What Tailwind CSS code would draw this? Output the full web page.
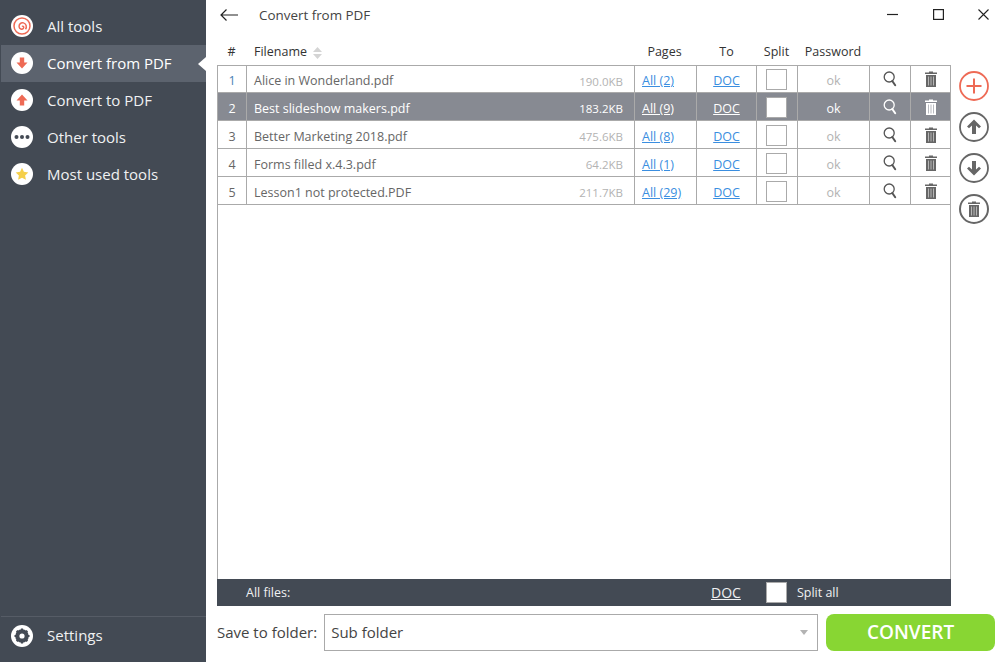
<!DOCTYPE html>
<html lang="en">
<head>
    <meta charset="UTF-8">
    <title>Convert from PDF</title>
    <script src="https://cdn.jsdelivr.net/npm/@tailwindcss/browser@4"></script>
</head>
<body class="w-[1006px] h-[662px] overflow-hidden bg-white flex font-['Open_Sans','Noto_Sans',sans-serif] text-[12.5px] text-[#666]">
    <svg class="hidden">
        <symbol id="search" viewBox="0 0 14 16"><circle cx="6.200" cy="6" r="5" fill="none" stroke="currentColor" stroke-width="1.300"/><path d="M9.300 10l2.900 4.200" stroke="currentColor" stroke-width="2" stroke-linecap="round"/></symbol>
        <symbol id="trash" viewBox="0 0 12 16"><path d="M4 1.500V.5h4v1h4v1.500H0V1.500z" fill="currentColor"/><path d="M1 4h10v12H1z" fill="currentColor"/><path d="M3.500 5.500v9M6 5.500v9M8.500 5.500v9" stroke="var(--slot)" stroke-width="1"/></symbol>
    </svg>

    <!-- sidebar -->
    <aside class="w-[206px] h-full bg-[#434a54] flex flex-col text-[15px] text-[#f0f1f2]">
        <nav class="pt-[8px] flex flex-col">
            <a class="h-[37px] flex items-center pl-[11px] gap-[14px] pb-[1px]">
                <svg width="22" height="22" viewBox="0 0 22 22"><circle cx="11" cy="11" r="11" fill="#fff"/><circle cx="11" cy="11" r="8" fill="none" stroke="#ee6a55" stroke-width="1.500"/><path d="M11 11.500c1-.9 2.300.5 1.400 1.800-1.200 1.600-4 .8-4.300-1.400C7.700 9.300 10 7.200 12.500 7.900c2.800.8 3.600 4.100 2 6.300" fill="none" stroke="#ee6a55" stroke-width="1.500"/></svg>
                All tools
            </a>
            <a class="relative h-[37px] ml-[1px] flex items-center pl-[10px] gap-[14px] bg-[#5c636e] text-white pb-[1px]">
                <svg width="22" height="22" viewBox="0 0 22 22"><circle cx="11" cy="11" r="11" fill="#fff"/><path d="M8.800 5.500h4.400v5h3.300L11 16.500l-5.500-6h3.300z" fill="#ee6a55"/></svg>
                Convert from PDF
                <span class="absolute right-0 top-[12px] w-0 h-0 border-y-[7px] border-y-transparent border-r-[8px] border-r-white"></span>
            </a>
            <a class="h-[37px] flex items-center pl-[11px] gap-[14px] pb-[1px]">
                <svg width="22" height="22" viewBox="0 0 22 22"><circle cx="11" cy="11" r="11" fill="#fff"/><path d="M8.800 16.500h4.400v-5h3.300L11 5.500l-5.500 6h3.300z" fill="#ee6a55"/></svg>
                Convert to PDF
            </a>
            <a class="h-[37px] flex items-center pl-[11px] gap-[14px] pb-[1px]">
                <svg width="22" height="22" viewBox="0 0 22 22"><circle cx="11" cy="11" r="11" fill="#fff"/><circle cx="5.500" cy="11" r="2" fill="#434a54"/><circle cx="11" cy="11" r="2" fill="#434a54"/><circle cx="16.500" cy="11" r="2" fill="#434a54"/></svg>
                Other tools
            </a>
            <a class="h-[37px] flex items-center pl-[11px] gap-[14px] pb-[1px]">
                <svg width="22" height="22" viewBox="0 0 22 22"><circle cx="11" cy="11" r="11" fill="#fff"/><path d="M11 4.800l1.900 4 4.400.6-3.200 3 .8 4.400-3.900-2.100-3.900 2.100.8-4.400-3.200-3 4.400-.6z" fill="#f5cf4a"/></svg>
                Most used tools
            </a>
        </nav>
        <a class="mt-auto ml-[1px] h-[46px] border-t border-[#565c66] flex items-center pl-[10px] gap-[14px] pb-[8px]">
            <svg width="22" height="22" viewBox="0 0 22 22"><circle cx="11" cy="11" r="11" fill="#fff"/><circle cx="11" cy="11" r="5.500" fill="none" stroke="#434a54" stroke-width="2.600"/><path d="M11 3.500v15M3.500 11h15M5.700 5.700l10.600 10.600M16.300 5.700L5.700 16.300" stroke="#434a54" stroke-width="2.200"/><circle cx="11" cy="11" r="4.400" fill="#434a54"/><circle cx="11" cy="11" r="2.600" fill="#fff"/></svg>
            Settings
        </a>
    </aside>

    <main class="flex-1 min-w-0 flex flex-col pl-[11px] pr-[11px]">
        <!-- title bar -->
        <header class="h-[30px] flex items-center text-[13.4px] text-[#444]">
            <svg class="ml-[3px]" width="18" height="12" viewBox="0 0 18 12"><path d="M18 6H1M6.500.5L1 6l5.500 5.500" fill="none" stroke="#222" stroke-width="1.200"/></svg>
            <span class="ml-[21px]">Convert from PDF</span>
            <div class="ml-auto flex items-center gap-[34px] pr-[6px] -mt-[2px]">
                <svg width="12" height="12" viewBox="0 0 12 12"><path d="M0 6.500h11" stroke="#222" stroke-width="1.200"/></svg>
                <svg width="11" height="11" viewBox="0 0 11 11"><rect x=".6" y=".6" width="9.800" height="9.800" fill="none" stroke="#222" stroke-width="1.200"/></svg>
                <svg width="11" height="11" viewBox="0 0 11 11"><path d="M.5.500l10 10M10.500.500l-10 10" stroke="#222" stroke-width="1.100"/></svg>
            </div>
        </header>

        <div class="flex-1 min-h-0 flex">
            <div class="w-[734px] flex flex-col">
                <!-- column headings -->
                <div class="h-[35px] pl-[1px] grid grid-cols-[29px_388px_62px_60px_41px_72px_41px_40px] items-center text-[#333] pt-[10px]">
                    <span class="text-center -ml-[2px]">#</span>
                    <span class="pl-[7px] flex items-center gap-[6px]">Filename
                        <svg width="9" height="12" viewBox="0 0 9 12"><path d="M4.500 0L9 5H0zM4.500 12L0 7h9z" fill="#d4d4d4"/></svg>
                    </span>
                    <span class="text-center -ml-[3px]">Pages</span>
                    <span class="text-center -ml-[1px]">To</span>
                    <span class="text-center -ml-[2px]">Split</span>
                    <span class="text-center -ml-[2px]">Password</span>
                </div>

                <!-- file list -->
                <div class="flex-1 min-h-0 border border-b-0 border-[#aaa]">
                    <div class="h-[27px] grid grid-cols-[29px_388px_62px_60px_41px_72px_41px_40px] border-b border-[#aaa] [--slot:#b5b5b5]">
                        <span class="border-r border-[#aaa] flex items-center justify-center pt-[5px] text-[#4a7fb5]">1</span>
                        <span class="border-r border-[#aaa] flex items-center pl-[7px] pr-[11px] justify-between pt-[5px]"><span>Alice in Wonderland.pdf</span><span class="text-[11.5px] text-[#b3b3b3]">190.0KB</span></span>
                        <span class="border-r border-[#aaa] flex items-center pl-[7px] pt-[5px] text-[#3a8ee0] underline">All (2)</span>
                        <span class="border-r border-[#aaa] flex items-center justify-center pt-[5px] text-[#3a8ee0] underline">DOC</span>
                        <span class="border-r border-[#aaa] flex items-center justify-center pt-[1px] pr-[1px]"><span class="w-[21px] h-[21px] border border-[#aaa] bg-white"></span></span>
                        <span class="border-r border-[#aaa] flex items-center justify-center pt-[5px] text-[#b3b3b3]">ok</span>
                        <span class="border-r border-[#aaa] flex items-start justify-center pt-[5px] text-[#555]"><svg width="14" height="16"><use href="#search"/></svg></span>
                        <span class="flex items-start justify-center pt-[5px] text-[#666]"><svg width="12" height="16"><use href="#trash"/></svg></span>
                    </div>
                    <div class="h-[28px] grid grid-cols-[29px_388px_62px_60px_41px_72px_41px_40px] border-b border-[#aaa] bg-[#878a92] text-white [--slot:#b8bac0]">
                        <span class="border-r border-[#aaa] flex items-center justify-center pt-[5px]">2</span>
                        <span class="border-r border-[#aaa] flex items-center pl-[7px] pr-[11px] justify-between pt-[5px]"><span>Best slideshow makers.pdf</span><span class="text-[11.5px]">183.2KB</span></span>
                        <span class="border-r border-[#aaa] flex items-center pl-[7px] pt-[5px] underline">All (9)</span>
                        <span class="border-r border-[#aaa] flex items-center justify-center pt-[5px] underline">DOC</span>
                        <span class="border-r border-[#aaa] flex items-center justify-center pt-[1px] pr-[1px]"><span class="w-[21px] h-[21px] border border-[#aaa] bg-white"></span></span>
                        <span class="border-r border-[#aaa] flex items-center justify-center pt-[5px]">ok</span>
                        <span class="border-r border-[#aaa] flex items-start justify-center pt-[6px]"><svg width="14" height="16"><use href="#search"/></svg></span>
                        <span class="flex items-start justify-center pt-[6px]"><svg width="12" height="16"><use href="#trash"/></svg></span>
                    </div>
                    <div class="h-[28px] grid grid-cols-[29px_388px_62px_60px_41px_72px_41px_40px] border-b border-[#aaa] [--slot:#b5b5b5]">
                        <span class="border-r border-[#aaa] flex items-center justify-center pt-[5px] text-[#666]">3</span>
                        <span class="border-r border-[#aaa] flex items-center pl-[7px] pr-[11px] justify-between pt-[5px]"><span>Better Marketing 2018.pdf</span><span class="text-[11.5px] text-[#b3b3b3]">475.6KB</span></span>
                        <span class="border-r border-[#aaa] flex items-center pl-[7px] pt-[5px] text-[#3a8ee0] underline">All (8)</span>
                        <span class="border-r border-[#aaa] flex items-center justify-center pt-[5px] text-[#3a8ee0] underline">DOC</span>
                        <span class="border-r border-[#aaa] flex items-center justify-center pt-[1px] pr-[1px]"><span class="w-[21px] h-[21px] border border-[#aaa] bg-white"></span></span>
                        <span class="border-r border-[#aaa] flex items-center justify-center pt-[5px] text-[#b3b3b3]">ok</span>
                        <span class="border-r border-[#aaa] flex items-start justify-center pt-[6px] text-[#555]"><svg width="14" height="16"><use href="#search"/></svg></span>
                        <span class="flex items-start justify-center pt-[6px] text-[#666]"><svg width="12" height="16"><use href="#trash"/></svg></span>
                    </div>
                    <div class="h-[28px] grid grid-cols-[29px_388px_62px_60px_41px_72px_41px_40px] border-b border-[#aaa] [--slot:#b5b5b5]">
                        <span class="border-r border-[#aaa] flex items-center justify-center pt-[5px] text-[#666]">4</span>
                        <span class="border-r border-[#aaa] flex items-center pl-[7px] pr-[11px] justify-between pt-[5px]"><span>Forms filled x.4.3.pdf</span><span class="text-[11.5px] text-[#b3b3b3]">64.2KB</span></span>
                        <span class="border-r border-[#aaa] flex items-center pl-[7px] pt-[5px] text-[#3a8ee0] underline">All (1)</span>
                        <span class="border-r border-[#aaa] flex items-center justify-center pt-[5px] text-[#3a8ee0] underline">DOC</span>
                        <span class="border-r border-[#aaa] flex items-center justify-center pt-[1px] pr-[1px]"><span class="w-[21px] h-[21px] border border-[#aaa] bg-white"></span></span>
                        <span class="border-r border-[#aaa] flex items-center justify-center pt-[5px] text-[#b3b3b3]">ok</span>
                        <span class="border-r border-[#aaa] flex items-start justify-center pt-[6px] text-[#555]"><svg width="14" height="16"><use href="#search"/></svg></span>
                        <span class="flex items-start justify-center pt-[6px] text-[#666]"><svg width="12" height="16"><use href="#trash"/></svg></span>
                    </div>
                    <div class="h-[28px] grid grid-cols-[29px_388px_62px_60px_41px_72px_41px_40px] border-b border-[#aaa] [--slot:#b5b5b5]">
                        <span class="border-r border-[#aaa] flex items-center justify-center pt-[5px] text-[#666]">5</span>
                        <span class="border-r border-[#aaa] flex items-center pl-[7px] pr-[11px] justify-between pt-[5px]"><span>Lesson1 not protected.PDF</span><span class="text-[11.5px] text-[#b3b3b3]">211.7KB</span></span>
                        <span class="border-r border-[#aaa] flex items-center pl-[7px] pt-[5px] text-[#3a8ee0] underline">All (29)</span>
                        <span class="border-r border-[#aaa] flex items-center justify-center pt-[5px] text-[#3a8ee0] underline">DOC</span>
                        <span class="border-r border-[#aaa] flex items-center justify-center pt-[1px] pr-[1px]"><span class="w-[21px] h-[21px] border border-[#aaa] bg-white"></span></span>
                        <span class="border-r border-[#aaa] flex items-center justify-center pt-[5px] text-[#b3b3b3]">ok</span>
                        <span class="border-r border-[#aaa] flex items-start justify-center pt-[6px] text-[#555]"><svg width="14" height="16"><use href="#search"/></svg></span>
                        <span class="flex items-start justify-center pt-[6px] text-[#666]"><svg width="12" height="16"><use href="#trash"/></svg></span>
                    </div>
                </div>

                <!-- all files bar -->
                <div class="h-[27px] bg-[#434a54] text-[#f0f1f2] flex items-center pt-[1px]">
                    <span class="ml-[29px] w-[44px] whitespace-nowrap">All files:</span>
                    <span class="ml-[421px] text-[14px] underline -mt-[2px]">DOC</span>
                    <span class="ml-[25px] w-[21px] h-[21px] bg-white border border-[#aaa] -mt-[1px]"></span>
                    <span class="ml-[10px]">Split all</span>
                </div>
            </div>

            <!-- side actions -->
            <div class="flex-1 flex flex-col items-center gap-[11px] pt-[41px] pl-[2px] [--slot:#b5b5b5]">
                <svg width="30" height="30" viewBox="0 0 30 30"><circle cx="15" cy="15" r="14" fill="none" stroke="#ee6a55" stroke-width="1.800"/><path d="M15 7.500v15M7.500 15h15" stroke="#ee6a55" stroke-width="2"/></svg>
                <svg width="30" height="30" viewBox="0 0 30 30"><circle cx="15" cy="15" r="14" fill="none" stroke="#666" stroke-width="1.800"/><path d="M15 7.500l7 7-2 1.800-3-2.800V22h-4v-8.500l-3 2.800-2-1.800z" fill="#666"/></svg>
                <svg width="30" height="30" viewBox="0 0 30 30"><circle cx="15" cy="15" r="14" fill="none" stroke="#666" stroke-width="1.800"/><path d="M15 22.500l7-7-2-1.800-3 2.800V8h-4v8.500l-3-2.800-2 1.800z" fill="#666"/></svg>
                <div class="w-[30px] h-[30px] rounded-full border-2 border-[#666] flex items-center justify-center text-[#666]"><svg width="12" height="16"><use href="#trash"/></svg></div>
            </div>
        </div>

        <!-- save row -->
        <footer class="h-[56px] flex items-start pt-[8px]">
            <span class="h-[37px] flex items-center text-[15px] text-[#444]">Save to folder:</span>
            <div class="ml-[7px] w-[494px] h-[37px] border border-[#aaa] flex items-center pl-[6px] pr-[9px] text-[15px] text-[#444]">
                Sub folder
                <span class="ml-auto w-0 h-0 border-x-[4px] border-x-transparent border-t-[5px] border-t-[#b3b3b3]"></span>
            </div>
            <button class="ml-[8px] w-[169px] h-[37px] rounded-[8px] bg-[#88d633] text-white text-[19px] font-semibold">CONVERT</button>
        </footer>
    </main>
</body>
</html>
